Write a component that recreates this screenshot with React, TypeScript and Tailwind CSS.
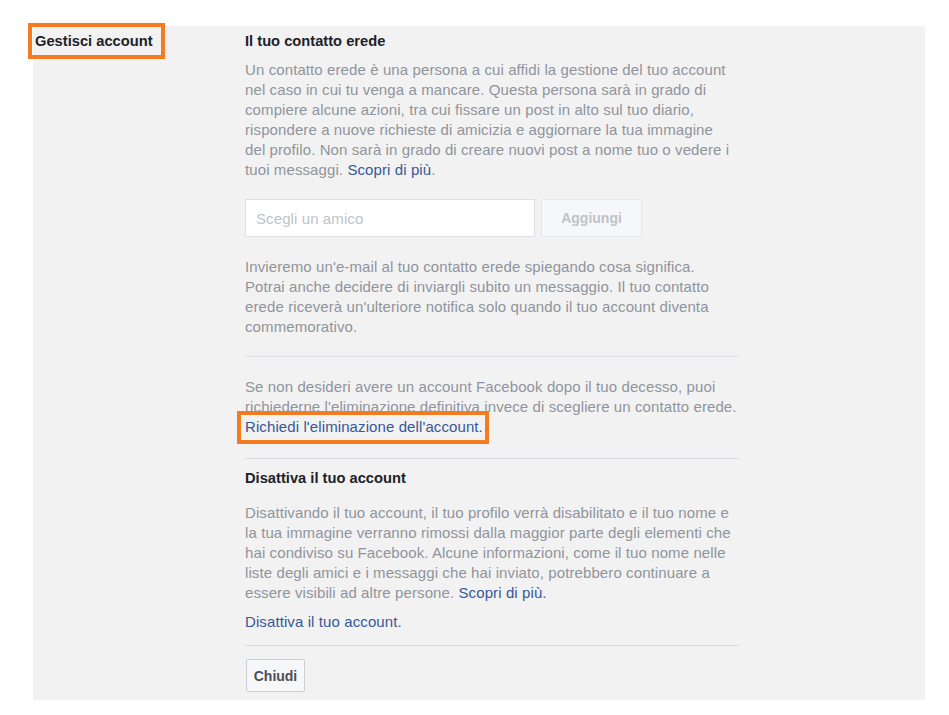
export default function App() {
  return (
    <div
      className="min-h-[715px] w-[949px] bg-white pt-[26px] pl-[33px]"
      style={{ fontFamily: '"Liberation Sans", Arial, sans-serif' }}
    >
      <div className="flex w-[892px] bg-[#f2f2f2] pt-[5px] pb-[8px] text-[15px] leading-[20px] tracking-[0.1px]">
        {/* left label */}
        <div className="w-[212px] shrink-0 pl-[2px]">
          <div className="relative inline-block text-[14.7px] font-bold tracking-normal text-[#1d2129]">
            Gestisci account
            <span className="pointer-events-none absolute left-[-7px] top-[-8px] h-[36px] w-[137px] border-[4px] border-[#f47b20]" />
          </div>
        </div>

        {/* content */}
        <div className="w-[494px] shrink-0 whitespace-nowrap text-[#90949c]">
          <h2 className="text-[14.7px] font-bold tracking-normal text-[#1d2129]">Il tuo contatto erede</h2>
          <p className="mt-[9px]">
            Un contatto erede è una persona a cui affidi la gestione del tuo account
            <br />
            nel caso in cui tu venga a mancare. Questa persona sarà in grado di
            <br />
            compiere alcune azioni, tra cui fissare un post in alto sul tuo diario,
            <br />
            rispondere a nuove richieste di amicizia e aggiornare la tua immagine
            <br />
            del profilo. Non sarà in grado di creare nuovi post a nome tuo o vedere i
            <br />
            tuoi messaggi. <a className="text-[#365899]">Scopri di più</a>.
          </p>

          <div className="mt-[19px] flex gap-[6px]">
            <input
              placeholder="Scegli un amico"
              className="h-[38px] w-[290px] border border-[#dddfe2] bg-white px-[10px] text-[15px] placeholder:text-[#bec3c9] outline-none"
            />
            <button className="h-[38px] w-[101px] rounded-[2px] border border-[#e5e6e9] bg-[#f6f7f9] text-[14px] font-bold tracking-normal text-[#bec3c9]">
              Aggiungi
            </button>
          </div>

          <p className="mt-[20px]">
            Invieremo un'e-mail al tuo contatto erede spiegando cosa significa.
            <br />
            Potrai anche decidere di inviargli subito un messaggio. Il tuo contatto
            <br />
            erede riceverà un'ulteriore notifica solo quando il tuo account diventa
            <br />
            commemorativo.
          </p>

          <div className="mt-[19px] h-px bg-[#dadde1]" />

          <p className="mt-[20px]">
            Se non desideri avere un account Facebook dopo il tuo decesso, puoi
            <br />
            richiederne l'eliminazione definitiva invece di scegliere un contatto erede.
            <br />
            <span className="relative inline-block text-[#365899]">
              Richiedi l'eliminazione dell'account.
              <span className="pointer-events-none absolute left-[-8px] top-[-6px] h-[33px] w-[252px] border-[4px] border-[#f47b20]" />
            </span>
          </p>

          <div className="mt-[21px] h-px bg-[#dadde1]" />

          <h2 className="mt-[9px] text-[14.7px] font-bold tracking-normal text-[#1d2129]">Disattiva il tuo account</h2>
          <p className="mt-[15px]">
            Disattivando il tuo account, il tuo profilo verrà disabilitato e il tuo nome e
            <br />
            la tua immagine verranno rimossi dalla maggior parte degli elementi che
            <br />
            hai condiviso su Facebook. Alcune informazioni, come il tuo nome nelle
            <br />
            liste degli amici e i messaggi che hai inviato, potrebbero continuare a
            <br />
            essere visibili ad altre persone. <a className="text-[#365899]">Scopri di più.</a>
          </p>

          <p className="mt-[9px] text-[#365899]">Disattiva il tuo account.</p>

          <div className="mt-[13px] h-px bg-[#dadde1]" />

          <button className="mt-[13px] ml-px h-[33px] w-[59px] rounded-[2px] border border-[#ccd0d5] bg-[#f6f7f9] text-[14px] font-bold tracking-normal text-[#4b4f56]">
            Chiudi
          </button>
        </div>
      </div>
    </div>
  );
}
